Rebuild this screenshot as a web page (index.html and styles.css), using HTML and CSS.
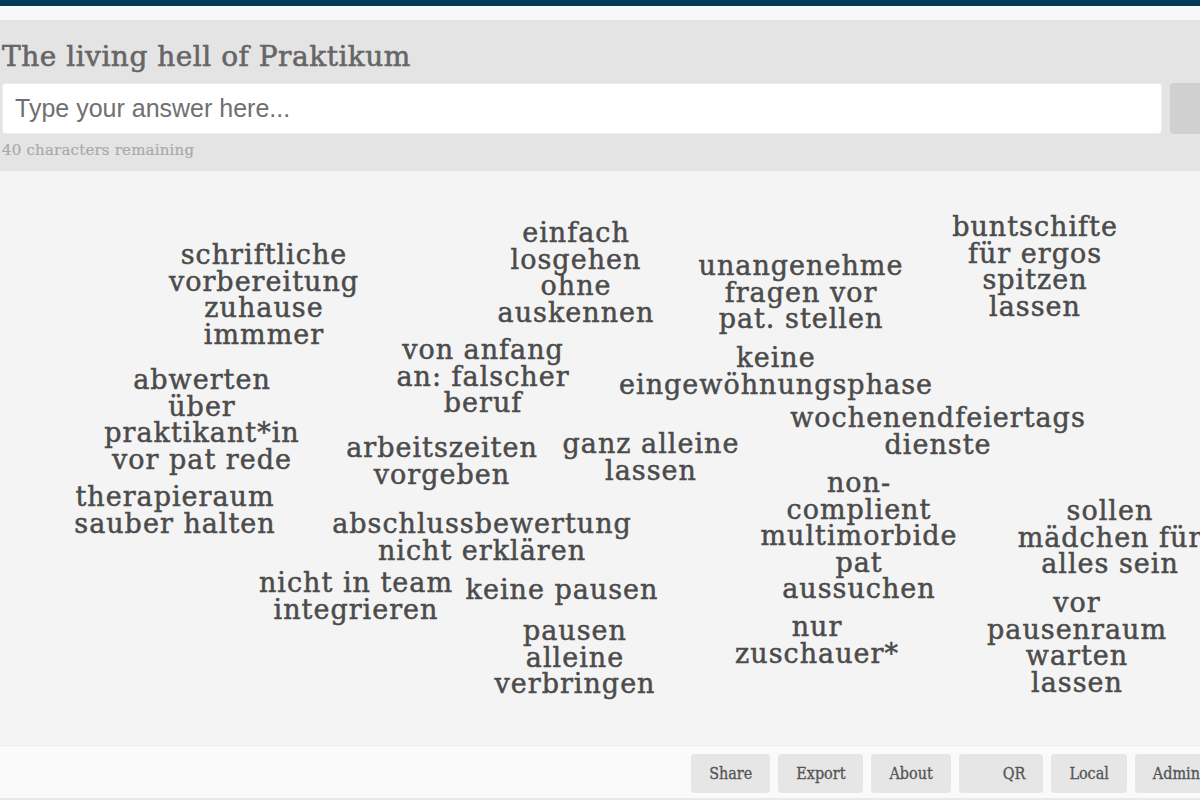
FILE: index.html
```html
<!DOCTYPE html>
<html lang="de">
<head>
    <meta charset="UTF-8">
    <meta name="viewport" content="width=device-width, initial-scale=1.0">
    <title>The living hell of Praktikum</title>
    <link rel="stylesheet" href="styles.css">
</head>
<body>
    <div class="topbar"></div>
    <div class="page">
        <header class="ask">
            <h1 class="question">The living hell of Praktikum</h1>
            <form class="answer" onsubmit="return false">
                <input type="text" class="answer-input" maxlength="40" placeholder="Type your answer here...">
                <button class="submit">Submit</button>
            </form>
            <div class="remaining">40 characters remaining</div>
        </header>

        <main class="cloud">
            <span class="word" style="left:264px; top:242px">schriftliche<br>vorbereitung<br>zuhause<br>immmer</span>
            <span class="word" style="left:576px; top:220px">einfach<br>losgehen<br>ohne<br>auskennen</span>
            <span class="word" style="left:801px; top:253px">unangenehme<br>fragen vor<br>pat. stellen</span>
            <span class="word" style="left:1035px; top:214px">buntschifte<br>für ergos<br>spitzen<br>lassen</span>
            <span class="word" style="left:483px; top:337px">von anfang<br>an: falscher<br>beruf</span>
            <span class="word" style="left:776px; top:345px">keine<br>eingewöhnungsphase</span>
            <span class="word" style="left:202px; top:367px">abwerten<br>über<br>praktikant*in<br>vor pat rede</span>
            <span class="word" style="left:938px; top:405px">wochenendfeiertags<br>dienste</span>
            <span class="word" style="left:442px; top:435px">arbeitszeiten<br>vorgeben</span>
            <span class="word" style="left:651px; top:431px">ganz alleine<br>lassen</span>
            <span class="word" style="left:175px; top:484px">therapieraum<br>sauber halten</span>
            <span class="word" style="left:859px; top:470px">non-<br>complient<br>multimorbide<br>pat<br>aussuchen</span>
            <span class="word" style="left:482px; top:511px">abschlussbewertung<br>nicht erklären</span>
            <span class="word" style="left:1110px; top:498px">sollen<br>mädchen für<br>alles sein</span>
            <span class="word" style="left:356px; top:570px">nicht in team<br>integrieren</span>
            <span class="word" style="left:562px; top:577px">keine pausen</span>
            <span class="word" style="left:1077px; top:590px">vor<br>pausenraum<br>warten<br>lassen</span>
            <span class="word" style="left:575px; top:618px">pausen<br>alleine<br>verbringen</span>
            <span class="word" style="left:817px; top:614px">nur<br>zuschauer*</span>
        </main>

        <footer class="actions">
            <button class="btn">Share</button>
            <button class="btn">Export</button>
            <button class="btn">About</button>
            <button class="btn qr">QR</button>
            <button class="btn">Local</button>
            <button class="btn">Admin</button>
        </footer>
    </div>
</body>
</html>
```

FILE: styles.css
```css
:root{
    --navy: #033a59;
    --text: #4b4b4b;
    --muted: #a9a9a9;
    --head: #e4e4e4;
    --canvas: #f4f4f4;
    --slab: "DejaVu Serif", serif;
    --slab-narrow: "DejaVu Serif Condensed", "DejaVu Serif", serif;
}
body {
    margin: 0;
    background: #fafafa;
    overflow: hidden;
    font-family: var(--slab);
    color: var(--text);
}
.topbar {
    height: 6px;
    background: var(--navy);
    border-bottom: 14px solid #f8f8f8;
}
.page {
    width: 1300px;
}
.ask {
    background: var(--head);
    padding: 20px 2px 12px;
}
.question {
    margin: 0;
    font-size: 28px;
    line-height: 34px;
    font-weight: normal;
    letter-spacing: 0.5px;
    color: #666;
    -webkit-text-stroke: 0.6px #666;
}
.answer {
    display: flex;
    gap: 8px;
    margin-top: 9px;
}
.answer-input {
    flex: 1;
    height: 51px;
    box-sizing: border-box;
    padding: 0 12px;
    border: 1px solid #ececec;
    border-radius: 3px;
    background: #fff;
    font-family: "Liberation Sans", Arial, sans-serif;
    font-size: 25px;
    color: #555;
}
.answer-input::placeholder { color: #707070; }
.submit {
    width: 128px;
    border: none;
    border-radius: 4px;
    background: #d0d0d0;
    font-family: var(--slab-narrow);
    font-size: 16px;
    color: #555;
}
.remaining {
    margin-top: 7px;
    font-size: 15px;
    line-height: 18px;
    letter-spacing: 0.2px;
    color: var(--muted);
    -webkit-text-stroke: 0.2px var(--muted);
}
.cloud {
    position: relative;
    height: 574px;
    background: var(--canvas);
    pointer-events: none;
}
.word {
    position: absolute;
    margin-top: -171px;
    transform: translateX(-50%);
    text-align: center;
    white-space: nowrap;
    font-size: 27px;
    line-height: 26.5px;
    letter-spacing: 1px;
    color: var(--text);
    -webkit-text-stroke: 0.5px var(--text);
}
.actions {
    display: flex;
    justify-content: flex-end;
    gap: 8px;
    padding: 8px 82px 5px 0;
    border-top: 1px solid #ededed;
    border-bottom: 3px solid #e9e9e9;
}
.btn {
    height: 39px;
    padding: 0 18px;
    border: none;
    border-radius: 4px;
    background: #e6e6e6;
    font-family: var(--slab-narrow);
    font-size: 16px;
    color: #555;
    -webkit-text-stroke: 0.3px #555;
}
.qr { padding-left: 44px; }
```
